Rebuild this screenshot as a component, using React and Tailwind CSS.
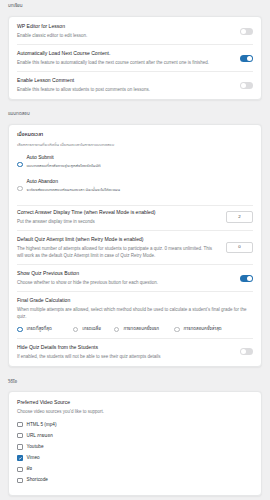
import React from "react";

function Toggle({ on }) {
  return on ? (
    <div className="w-[13px] h-[7px] rounded-full bg-[#2271b1] flex items-center justify-end px-[1px] shrink-0">
      <div className="w-[5px] h-[5px] rounded-full bg-white" />
    </div>
  ) : (
    <div className="w-[13px] h-[7px] rounded-full bg-[#dcdcde] flex items-center px-[1px] shrink-0">
      <div className="w-[5px] h-[5px] rounded-full bg-white" />
    </div>
  );
}

function Radio({ on }) {
  return on ? (
    <div className="w-[5.5px] h-[5.5px] rounded-full border-[1.5px] border-[#2271b1] bg-white shrink-0" />
  ) : (
    <div className="w-[5.5px] h-[5.5px] rounded-full border-[0.7px] border-[#b5b7ba] bg-white shrink-0" />
  );
}

function Checkbox({ on }) {
  return on ? (
    <div className="w-[5.5px] h-[5.5px] rounded-[1px] bg-[#2271b1] flex items-center justify-center shrink-0">
      <svg viewBox="0 0 10 10" className="w-[4.5px] h-[4.5px]">
        <path d="M2 5.2 L4.2 7.3 L8 2.8" fill="none" stroke="white" strokeWidth="1.6" />
      </svg>
    </div>
  ) : (
    <div className="w-[5.5px] h-[5.5px] rounded-[1px] border-[0.7px] border-[#8c8f94] bg-white shrink-0" />
  );
}

function Title({ children }) {
  return <div className="text-[5.1px] leading-[6px] font-medium text-[#1d2327] whitespace-nowrap">{children}</div>;
}

function Desc({ children, className = "" }) {
  return <div className={"text-[4.5px] leading-[7px] text-[#787c82] mt-[3px] " + className}>{children}</div>;
}

function Row({ title, desc, right, first, pt = "pt-[5px]", descClass = "" }) {
  return (
    <div className={"flex items-center justify-between pb-[5px] " + (first ? "pt-[6px]" : "border-t border-[#ececec] " + pt)}>
      <div className="flex-1 min-w-0">
        <Title>{title}</Title>
        <Desc className={descClass}>{desc}</Desc>
      </div>
      {right}
    </div>
  );
}

function NumInput({ value }) {
  return (
    <div className="w-[27px] h-[11.5px] border-[0.7px] border-[#d5d6d8] rounded-[2px] bg-white flex items-center justify-center text-[4.4px] text-[#3c434a] shrink-0 ml-[8px]">
      {value}
    </div>
  );
}

function Heading({ children, className = "" }) {
  return <div className={"text-[4.6px] leading-[6px] text-[#50575e] " + className}>{children}</div>;
}

function Card({ children, className = "" }) {
  return (
    <div className={"bg-white rounded-[4px] border-[0.6px] border-[#e6e7e8] shadow-[0_0.5px_1.5px_rgba(0,0,0,0.05)] px-[8px] " + className}>
      {children}
    </div>
  );
}

export default function App() {
  return (
    <div className="min-h-[500px] bg-[#f0f0f1] px-[8px] pt-[3px] pb-[9px] font-['Liberation_Sans','Noto_Sans','Noto_Sans_Thai',sans-serif]">
      <Heading className="mb-[7px]">บทเรียน</Heading>
      <Card className="pb-[1px]">
        <Row first title="WP Editor for Lesson" desc="Enable classic editor to edit lesson." right={<Toggle />} />
        <Row
          title="Automatically Load Next Course Content."
          desc="Enable this feature to automatically load the next course content after the current one is finished."
          right={<Toggle on />}
        />
        <Row title="Enable Lesson Comment" desc="Enable this feature to allow students to post comments on lessons." right={<Toggle />} />
      </Card>

      <Heading className="mt-[11px] mb-[7px]">แบบทดสอบ</Heading>
      <Card className="pb-[1px]">
        <div className="pt-[6px] pb-[12px]">
          <Title>เมื่อหมดเวลา</Title>
          <div className="text-[4.1px] leading-[7px] text-[#787c82] mt-[4px]">เลือกการทำงานที่จะเกิดขึ้น เมื่อหมดเวลาในการทำแบบทดสอบ</div>
          <div className="flex items-start gap-[4px] mt-[6px]">
            <div className="mt-[7.5px]"><Radio on /></div>
            <div>
              <div className="text-[5px] leading-[6px] text-[#1d2327]">Auto Submit</div>
              <div className="text-[4.2px] leading-[7px] text-[#50575e] mt-[2px]">แบบทดสอบที่กำลังทำอยู่จะถูกส่งโดยอัตโนมัติ</div>
            </div>
          </div>
          <div className="flex items-start gap-[4px] mt-[9px]">
            <div className="mt-[7.5px]"><Radio /></div>
            <div>
              <div className="text-[5px] leading-[6px] text-[#1d2327]">Auto Abandon</div>
              <div className="text-[4.2px] leading-[7px] text-[#50575e] mt-[2px]">จะต้องส่งแบบทดสอบก่อนหมดเวลา มิฉะนั้นจะไม่ได้คะแนน</div>
            </div>
          </div>
        </div>
        <Row
          pt="pt-[3px]"
          title="Correct Answer Display Time (when Reveal Mode is enabled)"
          desc="Put the answer display time in seconds"
          right={<NumInput value="2" />}
        />
        <Row
          title="Default Quiz Attempt limit (when Retry Mode is enabled)"
          desc="The highest number of attempts allowed for students to participate a quiz. 0 means unlimited. This will work as the default Quiz Attempt limit in case of Quiz Retry Mode."
          descClass="pr-[4px]"
          right={<NumInput value="0" />}
        />
        <Row
          title="Show Quiz Previous Button"
          desc="Choose whether to show or hide the previous button for each question."
          right={<Toggle on />}
        />
        <div className="border-t border-[#ececec] pt-[5px] pb-[5px]">
          <Title>Final Grade Calculation</Title>
          <Desc>When multiple attempts are allowed, select which method should be used to calculate a student's final grade for the quiz.</Desc>
          <div className="flex items-center mt-[6.5px] h-[6px] text-[4.6px] text-[#3c434a] whitespace-nowrap">
            <div className="flex items-center gap-[4px]"><Radio on /><span>เกรดที่สูงที่สุด</span></div>
            <div className="flex items-center gap-[4px] ml-[21px]"><Radio /><span>เกรดเฉลี่ย</span></div>
            <div className="flex items-center gap-[4px] ml-[13px]"><Radio /><span>การทดสอบครั้งแรก</span></div>
            <div className="flex items-center gap-[4px] ml-[15px]"><Radio /><span>การทดสอบครั้งล่าสุด</span></div>
          </div>
        </div>
        <Row
          title="Hide Quiz Details from the Students"
          desc="If enabled, the students will not be able to see their quiz attempts details"
          right={<Toggle />}
        />
      </Card>

      <Heading className="mt-[12px] mb-[6px]">วิดีโอ</Heading>
      <Card className="pt-[7px] pb-[12px]">
        <Title>Preferred Video Source</Title>
        <div className="text-[4.5px] leading-[7px] text-[#787c82] mt-[3.5px]">Choose video sources you'd like to support.</div>
        <div className="flex flex-col gap-[5.2px] mt-[6.5px]">
          {[
            ["HTML 5 (mp4)", false],
            ["URL ภายนอก", false],
            ["Youtube", false],
            ["Vimeo", true],
            ["ฝัง", false],
            ["Shortcode", false],
          ].map(([label, on]) => (
            <div key={label} className="flex items-center gap-[4px] h-[6px]">
              <Checkbox on={on} />
              <span className="text-[4.7px] text-[#2c3338] leading-[6px]">{label}</span>
            </div>
          ))}
        </div>
      </Card>
    </div>
  );
}
